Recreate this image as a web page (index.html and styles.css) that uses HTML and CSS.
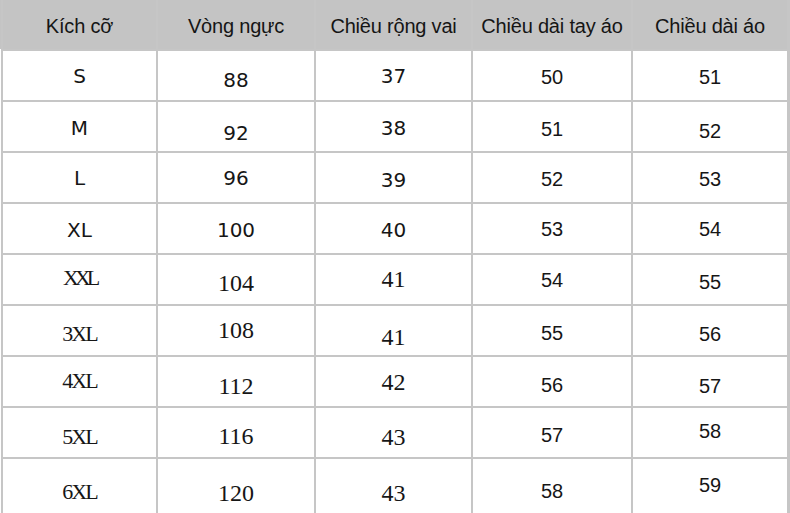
FILE: index.html
```html
<!DOCTYPE html>
<html lang="vi">
<head>
<meta charset="utf-8">
<title>Bảng kích cỡ</title>
<link rel="stylesheet" href="styles.css">
</head>
<body>
<div class="chart">
  <div class="hd">Kích cỡ</div>
  <div class="hd">Vòng ngực</div>
  <div class="hd">Chiều rộng vai</div>
  <div class="hd">Chiều dài tay áo</div>
  <div class="hd">Chiều dài áo</div>

  <div class="c lbl">S</div>
  <div class="c dv dn4">88</div>
  <div class="c dv">37</div>
  <div class="c ar dn2">50</div>
  <div class="c ar dn2">51</div>

  <div class="c lbl dn1">M</div>
  <div class="c dv dn6">92</div>
  <div class="c dv dn1">38</div>
  <div class="c ar dn3">51</div>
  <div class="c ar dn5">52</div>

  <div class="c lbl">L</div>
  <div class="c dv">96</div>
  <div class="c dv dn2">39</div>
  <div class="c ar dn2">52</div>
  <div class="c ar dn2">53</div>

  <div class="c lbl dn1">XL</div>
  <div class="c dv dn1">100</div>
  <div class="c dv dn1">40</div>
  <div class="c ar dn1">53</div>
  <div class="c ar dn1">54</div>

  <div class="c sr lbl-s xxl up2">XXL</div>
  <div class="c sr dn4">104</div>
  <div class="c sr">41</div>
  <div class="c ar dn1">54</div>
  <div class="c ar dn3">55</div>

  <div class="c sr lbl-s dn3">3XL</div>
  <div class="c sr">108</div>
  <div class="c sr dn7">41</div>
  <div class="c ar dn3">55</div>
  <div class="c ar dn4">56</div>

  <div class="c sr lbl-s up1">4XL</div>
  <div class="c sr dn5">112</div>
  <div class="c sr dn1">42</div>
  <div class="c ar dn4">56</div>
  <div class="c ar dn5">57</div>

  <div class="c sr lbl-s dn4">5XL</div>
  <div class="c sr dn4">116</div>
  <div class="c sr dn5">43</div>
  <div class="c ar dn3">57</div>
  <div class="c ar up1">58</div>

  <div class="c sr lbl-s last">6XL</div>
  <div class="c sr last dn1">120</div>
  <div class="c sr last dn1">43</div>
  <div class="c ar last up1">58</div>
  <div class="c ar last up7">59</div>
</div>
</body>
</html>
```

FILE: styles.css
```css
html {
  background: linear-gradient(#c4c4c4 0 49px, #ffffff 49px);
}
body {
  margin: 0;
  width: 790px;
  height: 513px;
  overflow: hidden;
}
.chart {
  margin-left: 1px;
  width: 789px;
  display: grid;
  grid-template-columns: 153px 156px 155px 158px 154px;
  grid-template-rows: 49px repeat(8, 49px) 66px;
  column-gap: 2px;
  row-gap: 2px;
  padding: 0 2px;
  box-sizing: border-box;
  background: #c6c6c6;
}
.hd {
  background: #c4c4c4;
  color: #151515;
  font-family: "Liberation Sans", Arial, sans-serif;
  font-size: 20px;
  display: flex;
  align-items: center;
  justify-content: center;
  padding-top: 4px;
  white-space: nowrap;
  letter-spacing: -0.2px;
}
.c {
  background: #ffffff;
  color: #161616;
  display: flex;
  align-items: center;
  justify-content: center;
  box-sizing: border-box;
}
.lbl {
  font-family: "DejaVu Sans", sans-serif;
  font-size: 20px;
}
.dv {
  font-family: "DejaVu Sans", sans-serif;
  font-size: 20px;
}
.sr {
  font-family: "Liberation Serif", "Times New Roman", serif;
  font-size: 24px;
}
.lbl-s {
  font-size: 22px;
  letter-spacing: -2px;
}
.xxl {
  letter-spacing: -4px;
}
.ar {
  font-family: "Liberation Sans", Arial, sans-serif;
  font-size: 20px;
}
.dn1 { padding-top: 2px; }
.dn2 { padding-top: 4px; }
.dn3 { padding-top: 6px; }
.dn4 { padding-top: 8px; }
.dn5 { padding-top: 10px; }
.dn6 { padding-top: 12px; }
.dn7 { padding-top: 14px; }
.up1 { padding-bottom: 2px; }
.up2 { padding-bottom: 4px; }
.up7 { padding-bottom: 14px; }
```
